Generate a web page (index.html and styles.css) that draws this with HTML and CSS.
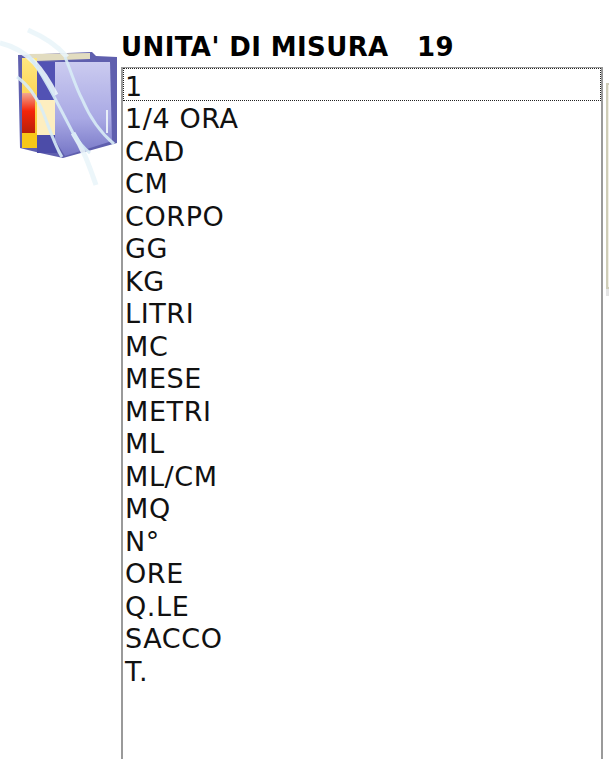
FILE: index.html
```html
<!DOCTYPE html>
<html lang="en">
<head>
  <meta charset="UTF-8">
  <title>Unita' di misura</title>
  <link rel="stylesheet" href="styles.css">
</head>
<body>
<div class="page">
  <div class="logo">
    <svg width="122" height="200" viewBox="0 0 122 200">
      <defs>
        <linearGradient id="cover" x1="0" y1="0" x2="0" y2="1">
          <stop offset="0" stop-color="#cbcbf0"/>
          <stop offset="0.6" stop-color="#a9a9e4"/>
          <stop offset="1" stop-color="#7676c6"/>
        </linearGradient>
        <linearGradient id="spine" x1="0" y1="0" x2="0" y2="1">
          <stop offset="0" stop-color="#ffe680"/>
          <stop offset="1" stop-color="#f8c020"/>
        </linearGradient>
        <linearGradient id="red" x1="0" y1="0" x2="0" y2="1">
          <stop offset="0" stop-color="#f0a890"/>
          <stop offset="0.45" stop-color="#f4240a"/>
          <stop offset="1" stop-color="#b82008"/>
        </linearGradient>
      </defs>
      <path d="M18 55 L92 52 L96 56 L117 57 L117 143 L63 158 L40 153 L20 148 Z" fill="#5f5fae"/>
      <path d="M28 54 L90 53 L90 59 L36 61 Z" fill="#e2dcc0"/>
      <rect x="22" y="58" width="15" height="90" fill="url(#spine)"/>
      <rect x="22" y="93" width="13" height="40" fill="url(#red)"/>
      <rect x="22" y="133" width="15" height="15" fill="#f8c818"/>
      <rect x="37" y="62" width="18" height="38" fill="#5252b4"/>
      <rect x="37" y="100" width="18" height="35" fill="#fdeec0"/>
      <rect x="37" y="135" width="20" height="18" fill="#4c4ca8"/>
      <path d="M55 62 L110 62 L112 141 L65 156 L55 140 Z" fill="url(#cover)"/>
      <path d="M0 43 C30 50 44 72 56 95" class="swirl faint"/>
      <path d="M28 30 C42 36 56 44 67 57" class="swirl faint"/>
      <path d="M73 133 C84 150 90 168 96 185" class="swirl faint"/>
      <path d="M28 55 C42 72 58 104 73 133 C79 143 85 149 90 153" class="swirl"/>
      <path d="M65 57 C72 74 76 88 82 99 C90 118 102 134 114 144" class="swirl"/>
      <path d="M17 77 C30 86 38 100 43 112 C50 130 55 146 62 157" class="swirl"/>
      <path d="M107 110 L107 133" class="swirl thin"/>
    </svg>
  </div>
  <div class="main">
    <h1 class="title">UNITA' DI MISURA &nbsp; 19</h1>
    <div class="listbox">
      <div class="row selected">1</div>
      <div class="row">1/4 ORA</div>
      <div class="row">CAD</div>
      <div class="row">CM</div>
      <div class="row">CORPO</div>
      <div class="row">GG</div>
      <div class="row">KG</div>
      <div class="row">LITRI</div>
      <div class="row">MC</div>
      <div class="row">MESE</div>
      <div class="row">METRI</div>
      <div class="row">ML</div>
      <div class="row">ML/CM</div>
      <div class="row">MQ</div>
      <div class="row">N°</div>
      <div class="row">ORE</div>
      <div class="row">Q.LE</div>
      <div class="row">SACCO</div>
      <div class="row">T.</div>
    </div>
  </div>
  <div class="scroll"></div>
</div>
</body>
</html>
```

FILE: styles.css
```css
html, body {
  margin: 0;
  padding: 0;
  background: #fff;
  overflow: hidden;
}
.page {
  display: flex;
  width: 609px;
  height: 759px;
  overflow: hidden;
  font-family: "DejaVu Sans", Verdana, sans-serif;
  color: #111;
}
.logo {
  width: 121px;
  flex: none;
}
.logo svg {
  display: block;
  filter: blur(0.6px);
}
.swirl {
  fill: none;
  stroke: #d8ecf6;
  stroke-width: 3;
  opacity: 0.9;
}
.faint {
  stroke: #eaf5f9;
  stroke-width: 5;
}
.thin {
  stroke: #eef6fa;
  stroke-width: 2;
}
.main {
  width: 482px;
  flex: none;
  padding-top: 32px;
}
.title {
  margin: 0 0 5px 0;
  height: 30px;
  font-size: 26px;
  line-height: 30px;
  font-weight: bold;
  letter-spacing: 0.4px;
  color: #000;
  white-space: pre;
}
.listbox {
  height: 700px;
  box-sizing: border-box;
  border-left: 2px solid #9a9a9a;
  border-top: 1px solid #9a9a9a;
  border-right: 2px solid #9a9a9a;
}
.row {
  height: 32.5px;
  line-height: 35px;
  padding-left: 2px;
  font-size: 27px;
  letter-spacing: 0.6px;
  white-space: nowrap;
}
.selected {
  height: 33px;
  padding-left: 1px;
  line-height: 35px;
  box-sizing: border-box;
  border: 1px dotted #222;
}
.scroll {
  width: 4px;
  flex: none;
  margin: 83px 0 0 3px;
  height: 206px;
  box-sizing: border-box;
  background: #f1efe4;
  border: 2px solid #cfcdb8;
  border-right: none;
  box-shadow: 0 7px 0 #e4e4e4;
}
```
